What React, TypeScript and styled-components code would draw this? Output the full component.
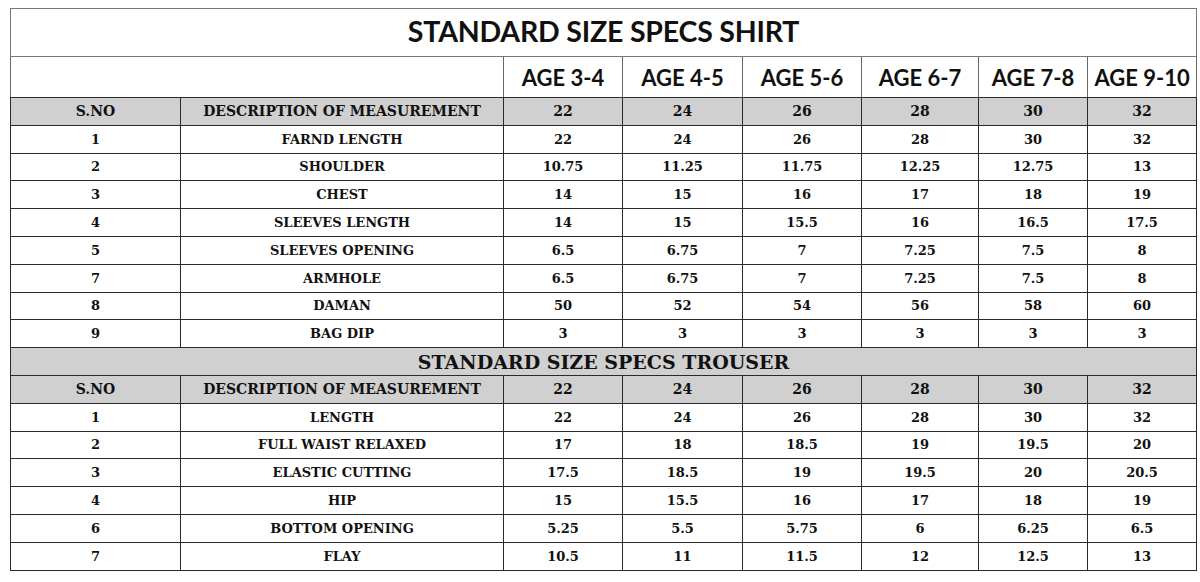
import React from 'react';
import styled, { createGlobalStyle } from 'styled-components';

const GlobalStyle = createGlobalStyle`
	html, body {
		margin: 0;
		padding: 0;
		background: #fff;
	}
	body {
		padding: 8px 0 0 10px;
	}
`;

const Sheet = styled.table`
	width: 1186px;
	border-collapse: collapse;
	table-layout: fixed;
	color: #111;
	font-family: "DejaVu Serif", "Liberation Serif", serif;
`;

const Cell = styled.td`
	border: 1px solid #2a2a2a;
	padding: 0;
	text-align: center;
	vertical-align: middle;
	font-weight: bold;
	font-size: 13px;
	height: 26.8px;
`;

const HeadCell = styled(Cell)`
	background: #d0d0d0;
	font-size: 14px;
`;

const TitleCell = styled.td`
	border: 1px solid #777;
	height: 47px;
	padding: 0;
	text-align: center;
	vertical-align: top;
	line-height: 45px;
	font-family: Lato, "Open Sans", sans-serif;
	font-variant-numeric: lining-nums;
	font-weight: bold;
	font-size: 28.5px;
	letter-spacing: -0.2px;
`;

const AgeCell = styled.td`
	border: 1px solid #666;
	border-bottom-color: #2a2a2a;
	height: 40px;
	padding: 0;
	text-align: center;
	font-family: Lato, "Open Sans", sans-serif;
	font-variant-numeric: lining-nums;
	font-weight: bold;
	font-size: 22px;
`;

const SectionCell = styled(Cell)`
	background: #d0d0d0;
	font-size: 19px;
`;

const widths = [170, 323, 119, 120, 119, 117, 109, 109];
const ages = ['AGE 3-4', 'AGE 4-5', 'AGE 5-6', 'AGE 6-7', 'AGE 7-8', 'AGE 9-10'];
const sizes = ['22', '24', '26', '28', '30', '32'];

type Row = [string, string, string[]];

const shirt: Row[] = [
	['1', 'FARND LENGTH', ['22', '24', '26', '28', '30', '32']],
	['2', 'SHOULDER', ['10.75', '11.25', '11.75', '12.25', '12.75', '13']],
	['3', 'CHEST', ['14', '15', '16', '17', '18', '19']],
	['4', 'SLEEVES LENGTH', ['14', '15', '15.5', '16', '16.5', '17.5']],
	['5', 'SLEEVES OPENING', ['6.5', '6.75', '7', '7.25', '7.5', '8']],
	['7', 'ARMHOLE', ['6.5', '6.75', '7', '7.25', '7.5', '8']],
	['8', 'DAMAN', ['50', '52', '54', '56', '58', '60']],
	['9', 'BAG DIP', ['3', '3', '3', '3', '3', '3']],
];

const trouser: Row[] = [
	['1', 'LENGTH', ['22', '24', '26', '28', '30', '32']],
	['2', 'FULL WAIST RELAXED', ['17', '18', '18.5', '19', '19.5', '20']],
	['3', 'ELASTIC CUTTING', ['17.5', '18.5', '19', '19.5', '20', '20.5']],
	['4', 'HIP', ['15', '15.5', '16', '17', '18', '19']],
	['6', 'BOTTOM OPENING', ['5.25', '5.5', '5.75', '6', '6.25', '6.5']],
	['7', 'FLAY', ['10.5', '11', '11.5', '12', '12.5', '13']],
];

const HeaderRow = () => (
	<tr>
		<HeadCell>S.NO</HeadCell>
		<HeadCell>DESCRIPTION OF MEASUREMENT</HeadCell>
		{sizes.map((s) => (
			<HeadCell key={s}>{s}</HeadCell>
		))}
	</tr>
);

const DataRows = ({ rows }: { rows: Row[] }) => (
	<>
		{rows.map(([no, label, values]) => (
			<tr key={no + label}>
				<Cell>{no}</Cell>
				<Cell>{label}</Cell>
				{values.map((v, i) => (
					<Cell key={i}>{v}</Cell>
				))}
			</tr>
		))}
	</>
);

const App = () => (
	<>
		<GlobalStyle />
		<Sheet>
			<colgroup>
				{widths.map((w, i) => (
					<col key={i} style={{ width: w }} />
				))}
			</colgroup>
			<tbody>
				<tr>
					<TitleCell colSpan={8}>STANDARD SIZE SPECS SHIRT</TitleCell>
				</tr>
				<tr>
					<AgeCell colSpan={2} />
					{ages.map((a) => (
						<AgeCell key={a}>{a}</AgeCell>
					))}
				</tr>
				<HeaderRow />
				<DataRows rows={shirt} />
				<tr>
					<SectionCell colSpan={8}>STANDARD SIZE SPECS TROUSER</SectionCell>
				</tr>
				<HeaderRow />
				<DataRows rows={trouser} />
			</tbody>
		</Sheet>
	</>
);

export default App;
